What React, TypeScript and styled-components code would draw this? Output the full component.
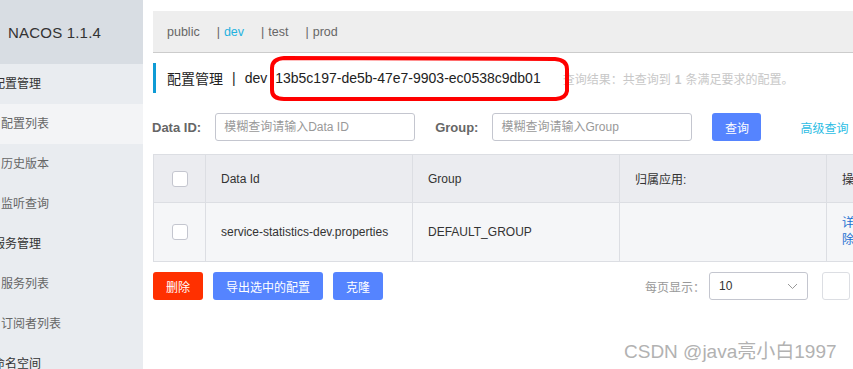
import React from 'react';
import styled, { createGlobalStyle } from 'styled-components';

const GlobalStyle = createGlobalStyle`
  html, body {
    margin: 0;
    padding: 0;
    overflow: hidden;
    background: #fff;
  }
  body {
    font-family: "Liberation Sans", "Noto Sans CJK SC", sans-serif;
    font-size: 12px;
    color: #333;
  }
`;

const Page = styled.div`
  position: relative;
  display: flex;
  width: 853px;
  height: 369px;
  overflow: hidden;
`;

const Sidebar = styled.aside`
  width: 143px;
  flex-shrink: 0;
  background: #e9ecf0;
  overflow: hidden;
`;

const Brand = styled.div`
  height: 64px;
  background: #d8dde3;
  display: flex;
  align-items: center;
  padding-left: 8px;
  font-size: 15px;
  color: #333;
  letter-spacing: 0.2px;
`;

const MenuItem = styled.div<{ $top?: boolean; $active?: boolean }>`
  height: 40px;
  line-height: 40px;
  white-space: nowrap;
  font-size: 12px;
  padding-left: ${p => (p.$top ? '0' : '1px')};
  text-indent: ${p => (p.$top ? '-7px' : '0')};
  color: ${p => (p.$top ? '#333' : '#666')};
  background: ${p => (p.$active ? '#f3f4f6' : 'transparent')};
`;

const Main = styled.main`
  flex: 1;
  min-width: 0;
  overflow: hidden;
`;

const Content = styled.div`
  width: 1000px;
  margin-left: 10px;
  padding-top: 11px;
`;

const TabBar = styled.div`
  height: 41px;
  background: #eeeeee;
  border-bottom: 1px solid #cccccc;
  display: flex;
  align-items: center;
  gap: 17px;
  padding-left: 14px;
  font-size: 12.5px;
`;

const Tab = styled.span<{ $active?: boolean }>`
  color: ${p => (p.$active ? '#1fb2df' : '#666')};
`;

const Sep = styled.span`
  color: #666;
  margin-right: 4px;
`;

const TitleRow = styled.div`
  margin-top: 10px;
  height: 30px;
  border-left: 3px solid #0f9bd5;
  padding-left: 11px;
  display: flex;
  align-items: center;
  font-size: 14px;
  color: #222;
  white-space: nowrap;
`;

const TitleBar = styled.span`
  margin: 0 9px 0 9px;
`;

const Uuid = styled.span`
  margin-left: 8px;
  font-size: 14px;
`;

const ResultNote = styled.span`
  margin-left: 22px;
  font-size: 12px;
  color: #c8c8c8;

  b {
    font-weight: bold;
    margin: 0 4px;
  }
`;

const SearchRow = styled.div`
  margin-top: 20px;
  height: 28px;
  display: flex;
  align-items: center;
`;

const Label = styled.label<{ $gap?: number }>`
  font-size: 13px;
  font-weight: bold;
  color: #666;
  margin-left: ${p => p.$gap ?? -1}px;
  margin-right: 14px;
`;

const Input = styled.input`
  box-sizing: border-box;
  width: 200px;
  height: 28px;
  border: 1px solid #c4c6cf;
  border-radius: 3px;
  padding: 0 8px;
  font-family: inherit;
  font-size: 12px;
  outline: none;

  &::placeholder {
    color: #999;
  }
`;

const Button = styled.button<{ $danger?: boolean }>`
  height: 28px;
  padding: 0 13px;
  border: none;
  border-radius: 3px;
  background: ${p => (p.$danger ? '#ff3000' : '#5584ff')};
  color: #fff;
  font-family: inherit;
  font-size: 12px;
  white-space: nowrap;
  cursor: pointer;
`;

const QueryButton = styled(Button)`
  margin-left: 20px;
  width: 49px;
  padding: 0;
`;

const AdvancedLink = styled.a`
  margin-left: 39px;
  color: #2cbde4;
  font-size: 12px;
  white-space: nowrap;
  text-decoration: none;
`;

const Table = styled.table`
  margin-top: 13px;
  width: 1100px;
  table-layout: fixed;
  border-collapse: collapse;
  font-size: 12px;
  color: #333;
`;

const Th = styled.th<{ $w?: number }>`
  box-sizing: border-box;
  width: ${p => (p.$w ? `${p.$w}px` : 'auto')};
  height: 48px;
  background: #ebecf0;
  border: 1px solid #dcdee3;
  text-align: left;
  font-weight: normal;
  padding: 0 0 0 15px;
`;

const Td = styled.td`
  box-sizing: border-box;
  height: 59px;
  background: #f5f6f8;
  border: 1px solid #dcdee3;
  padding: 0 0 0 15px;
  white-space: nowrap;
`;

const CheckCell = styled.div`
  display: flex;
  justify-content: center;
  margin-left: -15px;
`;

const Checkbox = styled.span`
  display: block;
  box-sizing: border-box;
  width: 16px;
  height: 16px;
  background: #fff;
  border: 1px solid #c4c6cf;
  border-radius: 3px;
`;

const OpLine = styled.div`
  color: #1a6fd1;
  line-height: 17px;
`;

const BottomRow = styled.div`
  margin-top: 10px;
  display: flex;
  align-items: center;
`;

const Actions = styled.div`
  display: flex;
  gap: 10px;
`;

const Pager = styled.div`
  margin-left: 262px;
  display: flex;
  align-items: center;
  color: #999;
  font-size: 12px;
`;

const Select = styled.div`
  box-sizing: border-box;
  margin-left: 4px;
  width: 99px;
  height: 28px;
  border: 1px solid #c4c6cf;
  border-radius: 3px;
  display: flex;
  align-items: center;
  justify-content: space-between;
  padding: 0 9px;
  color: #333;
  font-size: 12px;
`;

const PageBox = styled.div`
  box-sizing: border-box;
  margin-left: 14px;
  width: 28px;
  height: 28px;
  border: 1px solid #dcdee3;
  border-radius: 3px;
`;

const Annotation = styled.svg`
  position: absolute;
  left: 0;
  top: 0;
  pointer-events: none;
`;

const Watermark = styled.div`
  position: absolute;
  left: 624px;
  top: 336px;
  font-size: 19px;
  color: #b2b2b2;
  white-space: nowrap;
  text-shadow: 0 0 1px #fff;
`;

const menu = [
  { label: '配置管理', top: true },
  { label: '配置列表', active: true },
  { label: '历史版本' },
  { label: '监听查询' },
  { label: '服务管理', top: true },
  { label: '服务列表' },
  { label: '订阅者列表' },
  { label: '命名空间', top: true },
];

const tabs = [
  { name: 'public' },
  { name: 'dev', active: true, sep: true },
  { name: 'test', sep: true },
  { name: 'prod', sep: true },
];

const App: React.FC = () => {
  return (
    <>
      <GlobalStyle />
      <Page>
        <Sidebar>
          <Brand>NACOS 1.1.4</Brand>
          {menu.map(m => (
            <MenuItem key={m.label} $top={m.top} $active={m.active}>
              {m.label}
            </MenuItem>
          ))}
        </Sidebar>

        <Main>
          <Content>
            <TabBar>
              {tabs.map(t => (
                <span key={t.name}>
                  {t.sep && <Sep>|</Sep>}
                  <Tab $active={t.active}>{t.name}</Tab>
                </span>
              ))}
            </TabBar>

            <TitleRow>
              配置管理
              <TitleBar>|</TitleBar>
              dev
              <Uuid>13b5c197-de5b-47e7-9903-ec0538c9db01</Uuid>
              <ResultNote>
                查询结果：共查询到<b>1</b>条满足要求的配置。
              </ResultNote>
            </TitleRow>

            <SearchRow>
              <Label>Data ID:</Label>
              <Input placeholder="模糊查询请输入Data ID" />
              <Label $gap={20}>Group:</Label>
              <Input placeholder="模糊查询请输入Group" />
              <QueryButton>查询</QueryButton>
              <AdvancedLink>高级查询</AdvancedLink>
            </SearchRow>

            <Table>
              <thead>
                <tr>
                  <Th $w={52}>
                    <CheckCell><Checkbox /></CheckCell>
                  </Th>
                  <Th $w={207}>Data Id</Th>
                  <Th $w={207}>Group</Th>
                  <Th $w={207}>归属应用:</Th>
                  <Th>操作</Th>
                </tr>
              </thead>
              <tbody>
                <tr>
                  <Td>
                    <CheckCell><Checkbox /></CheckCell>
                  </Td>
                  <Td>service-statistics-dev.properties</Td>
                  <Td>DEFAULT_GROUP</Td>
                  <Td />
                  <Td>
                    <OpLine>详情 | 示例代码 | 编辑 | 删</OpLine>
                    <OpLine>除 | 更多</OpLine>
                  </Td>
                </tr>
              </tbody>
            </Table>

            <BottomRow>
              <Actions>
                <Button $danger>删除</Button>
                <Button>导出选中的配置</Button>
                <Button>克隆</Button>
              </Actions>
              <Pager>
                每页显示：
                <Select>
                  10
                  <svg width="11" height="7" viewBox="0 0 11 7">
                    <path d="M1 1l4.5 4.5L10 1" fill="none" stroke="#999" strokeWidth="1" />
                  </svg>
                </Select>
                <PageBox />
              </Pager>
            </BottomRow>
          </Content>
        </Main>

        <Annotation width="853" height="369" viewBox="0 0 853 369">
          <path
            d="M284 58 L555 59 Q567 60 567 69 L567 91 Q566 98 556 99 L284 99 Q272 99 272 90 L272 68 Q272 59 284 58 Z"
            fill="none"
            stroke="#ff0000"
            strokeWidth="4"
            strokeLinejoin="round"
          />
        </Annotation>

        <Watermark>CSDN @java亮小白1997</Watermark>
      </Page>
    </>
  );
};

export default App;
